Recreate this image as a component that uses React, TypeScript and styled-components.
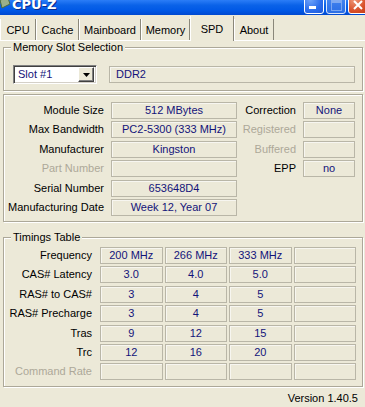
import React from "react";
import styled, { createGlobalStyle } from "styled-components";

const Global = createGlobalStyle`
  html, body { margin: 0; padding: 0; background: #ECE9D8; }
  body { font-family: "Liberation Sans", Arial, sans-serif; font-size: 11px; color: #000; }
  * { box-sizing: border-box; }
`;

const Window = styled.div`
  width: 365px;
  height: 407px;
  overflow: hidden;
  background: #ECE9D8;
  display: flex;
  flex-direction: column;
`;

const TitleBar = styled.div`
  height: 15px;
  flex: none;
  overflow: hidden;
  display: flex;
  align-items: flex-start;
  background: linear-gradient(to bottom, #2B7DF7 0%, #0A62E8 35%, #0058E6 70%, #0049D0 100%);
`;

const AppIcon = styled.svg`
  width: 10px;
  height: 12px;
  margin-top: -2px;
  flex: none;
`;

const TitleText = styled.span`
  margin-left: 2px;
  margin-top: -3px;
  color: #fff;
  font-family: "DejaVu Sans", sans-serif;
  font-weight: bold;
  font-size: 13px;
  line-height: 16px;
  text-shadow: 1px 1px 0 #0B2A8C;
  flex: 1;
`;

const Caption = styled.div`
  display: flex;
  gap: 2px;
  margin-top: -7px;
  margin-right: -3px;
`;

const CaptionButton = styled.div<{ $kind: "min" | "max" | "close" }>`
  width: 20px;
  height: 21px;
  border: 1px solid #fff;
  border-radius: 3px;
  position: relative;
  background: ${(p) =>
    p.$kind === "close"
      ? "radial-gradient(circle at 30% 30%, #F09A7A, #D8512B 60%, #C23B14)"
      : p.$kind === "max"
      ? "linear-gradient(to bottom, #4E8DF3, #3574E6)"
      : "radial-gradient(circle at 30% 30%, #6FA4FA, #2A6CEB 60%, #1F5AD9)"};
  opacity: ${(p) => (p.$kind === "max" ? 0.85 : 1)};
`;

const MinGlyph = styled.div`
  position: absolute;
  left: 4px;
  bottom: 4px;
  width: 7px;
  height: 3px;
  background: #fff;
`;

const MaxGlyph = styled.div`
  position: absolute;
  left: 4px;
  top: 6px;
  width: 11px;
  height: 11px;
  border: 1px solid #8FB3F2;
  border-top-width: 3px;
`;

const CloseGlyph = styled.svg`
  position: absolute;
  left: 3px;
  top: 5px;
`;

const TabStrip = styled.div`
  height: 26px;
  flex: none;
  display: flex;
  align-items: flex-end;
  border-bottom: 1px solid #fff;
  position: relative;
`;

const Tab = styled.div<{ $w: number; $active?: boolean }>`
  width: ${(p) => p.$w}px;
  height: ${(p) => (p.$active ? 25 : 21)}px;
  margin-bottom: ${(p) => (p.$active ? -1 : 0)}px;
  background: #ECE9D8;
  border-left: 1px solid #fff;
  border-right: 1px solid #8A877A;
  display: flex;
  justify-content: center;
  align-items: flex-start;
  padding-top: ${(p) => (p.$active ? 7 : 5)}px;
  font-size: 11px;
  line-height: 13px;
  flex: none;
  position: relative;
  z-index: ${(p) => (p.$active ? 1 : 0)};
`;

const Panel = styled.div`
  flex: 1;
  display: flex;
  flex-direction: column;
  padding: 0 2px 0 3px;
`;

const Group = styled.fieldset<{ $mt: number; $pt: number; $pb: number }>`
  margin: ${(p) => p.$mt}px 0 0 0;
  padding: ${(p) => p.$pt}px 6px ${(p) => p.$pb}px 4px;
  border: 1px solid #ACA899;
  box-shadow: inset 1px 1px 0 #fff, 1px 1px 0 #fff;
  min-width: 0;
`;

const Legend = styled.legend`
  margin-left: 3px;
  padding: 0 2px;
  font-size: 11px;
  line-height: 13px;
  background: #ECE9D8;
  position: relative;
`;

const SlotRow = styled.div`
  display: flex;
  align-items: center;
  padding-left: 5px;
  gap: 12px;
`;

const Combo = styled.div`
  width: 84px;
  height: 19px;
  background: #fff;
  border-top: 1px solid #808080;
  border-left: 1px solid #808080;
  border-right: 1px solid #fff;
  border-bottom: 1px solid #fff;
  box-shadow: inset 1px 1px 0 #404040, inset -1px -1px 0 #D4D0C8;
  display: flex;
  align-items: center;
  padding: 2px;
`;

const ComboText = styled.span`
  flex: 1;
  color: #13137A;
  padding-left: 2px;
  line-height: 13px;
`;

const ComboButton = styled.div`
  width: 16px;
  height: 15px;
  background: #ECE9D8;
  border-top: 1px solid #fff;
  border-left: 1px solid #fff;
  border-right: 1px solid #404040;
  border-bottom: 1px solid #404040;
  box-shadow: inset -1px -1px 0 #808080;
  display: flex;
  align-items: center;
  justify-content: center;
`;

const ValueBox = styled.div<{ $w: number; $align?: "left" | "center" }>`
  width: ${(p) => p.$w}px;
  height: 17px;
  flex: none;
  border: 1px solid #B9B6A7;
  box-shadow: inset 1px 1px 0 #F7F6F0;
  color: #13137A;
  font-size: 11px;
  line-height: 15px;
  text-align: ${(p) => p.$align ?? "center"};
  padding: 0 ${(p) => (p.$align === "left" ? 6 : 0)}px;
  white-space: nowrap;
  overflow: hidden;
`;

const Rows = styled.div`
  display: flex;
  flex-direction: column;
  gap: 2.4px;
`;

const Row = styled.div`
  display: flex;
  align-items: center;
  height: 17px;
`;

const Label = styled.div<{ $w: number; $gap: number; $disabled?: boolean }>`
  width: ${(p) => p.$w}px;
  margin-right: ${(p) => p.$gap}px;
  text-align: right;
  flex: none;
  white-space: nowrap;
  color: ${(p) => (p.$disabled ? "#ACA899" : "#000")};
  line-height: 13px;
`;

const Cells = styled.div`
  display: flex;
  gap: 2px;
`;

const Footer = styled.div`
  height: 19px;
  display: flex;
  align-items: center;
  justify-content: flex-end;
  padding-right: 5px;
  padding-top: 3px;
  font-size: 11px;
`;

type InfoRow = {
  label: string;
  value: string;
  disabled?: boolean;
  rLabel?: string;
  rValue?: string;
  rDisabled?: boolean;
};

const info: InfoRow[] = [
  { label: "Module Size", value: "512 MBytes", rLabel: "Correction", rValue: "None" },
  { label: "Max Bandwidth", value: "PC2-5300 (333 MHz)", rLabel: "Registered", rValue: "", rDisabled: true },
  { label: "Manufacturer", value: "Kingston", rLabel: "Buffered", rValue: "", rDisabled: true },
  { label: "Part Number", value: "", disabled: true, rLabel: "EPP", rValue: "no" },
  { label: "Serial Number", value: "653648D4" },
  { label: "Manufacturing Date", value: "Week 12, Year 07" },
];

const timings: { label: string; values: string[]; disabled?: boolean }[] = [
  { label: "Frequency", values: ["200 MHz", "266 MHz", "333 MHz", ""] },
  { label: "CAS# Latency", values: ["3.0", "4.0", "5.0", ""] },
  { label: "RAS# to CAS#", values: ["3", "4", "5", ""] },
  { label: "RAS# Precharge", values: ["3", "4", "5", ""] },
  { label: "Tras", values: ["9", "12", "15", ""] },
  { label: "Trc", values: ["12", "16", "20", ""] },
  { label: "Command Rate", values: ["", "", "", ""], disabled: true },
];

const tabs = [
  { name: "CPU", w: 36 },
  { name: "Cache", w: 43 },
  { name: "Mainboard", w: 62 },
  { name: "Memory", w: 49 },
  { name: "SPD", w: 44, active: true },
  { name: "About", w: 40 },
];

export default function App() {
  return (
    <>
      <Global />
      <Window>
        <TitleBar>
          <AppIcon viewBox="0 0 10 12">
            <path d="M0 2 L8 0 L10 6 L2 10 Z" fill="#9BB08A" stroke="#4F6B3A" strokeWidth="1" />
          </AppIcon>
          <TitleText>CPU-Z</TitleText>
          <Caption>
            <CaptionButton $kind="min">
              <MinGlyph />
            </CaptionButton>
            <CaptionButton $kind="max">
              <MaxGlyph />
            </CaptionButton>
            <CaptionButton $kind="close">
              <CloseGlyph width="12" height="12" viewBox="0 0 12 12">
                <path d="M2 2 L10 10 M10 2 L2 10" stroke="#fff" strokeWidth="2" />
              </CloseGlyph>
            </CaptionButton>
          </Caption>
        </TitleBar>
        <TabStrip>
          {tabs.map((t) => (
            <Tab key={t.name} $w={t.w} $active={t.active}>
              {t.name}
            </Tab>
          ))}
        </TabStrip>
        <Panel>
          <Group $mt={0} $pt={11} $pb={6}>
            <Legend>Memory Slot Selection</Legend>
            <SlotRow>
              <Combo>
                <ComboText>Slot #1</ComboText>
                <ComboButton>
                  <svg width="7" height="4" viewBox="0 0 7 4">
                    <path d="M0 0 H7 L3.5 4 Z" fill="#000" />
                  </svg>
                </ComboButton>
              </Combo>
              <ValueBox $w={246} $align="left">DDR2</ValueBox>
            </SlotRow>
          </Group>
          <Group $mt={3} $pt={7} $pb={5}>
            <Rows>
              {info.map((r) => (
                <Row key={r.label}>
                  <Label $w={96} $gap={7} $disabled={r.disabled}>
                    {r.label}
                  </Label>
                  <ValueBox $w={126}>{r.value}</ValueBox>
                  {r.rLabel !== undefined && (
                    <>
                      <Label $w={59} $gap={7} $disabled={r.rDisabled}>
                        {r.rLabel}
                      </Label>
                      <ValueBox $w={52}>{r.rValue}</ValueBox>
                    </>
                  )}
                </Row>
              ))}
            </Rows>
          </Group>
          <Group $mt={9} $pt={3} $pb={6}>
            <Legend>Timings Table</Legend>
            <Rows>
              {timings.map((r) => (
                <Row key={r.label}>
                  <Label $w={84} $gap={8} $disabled={r.disabled}>
                    {r.label}
                  </Label>
                  <Cells>
                    {r.values.map((v, i) => (
                      <ValueBox key={i} $w={62.5}>
                        {v}
                      </ValueBox>
                    ))}
                  </Cells>
                </Row>
              ))}
            </Rows>
          </Group>
          <Footer>Version 1.40.5</Footer>
        </Panel>
      </Window>
    </>
  );
}
